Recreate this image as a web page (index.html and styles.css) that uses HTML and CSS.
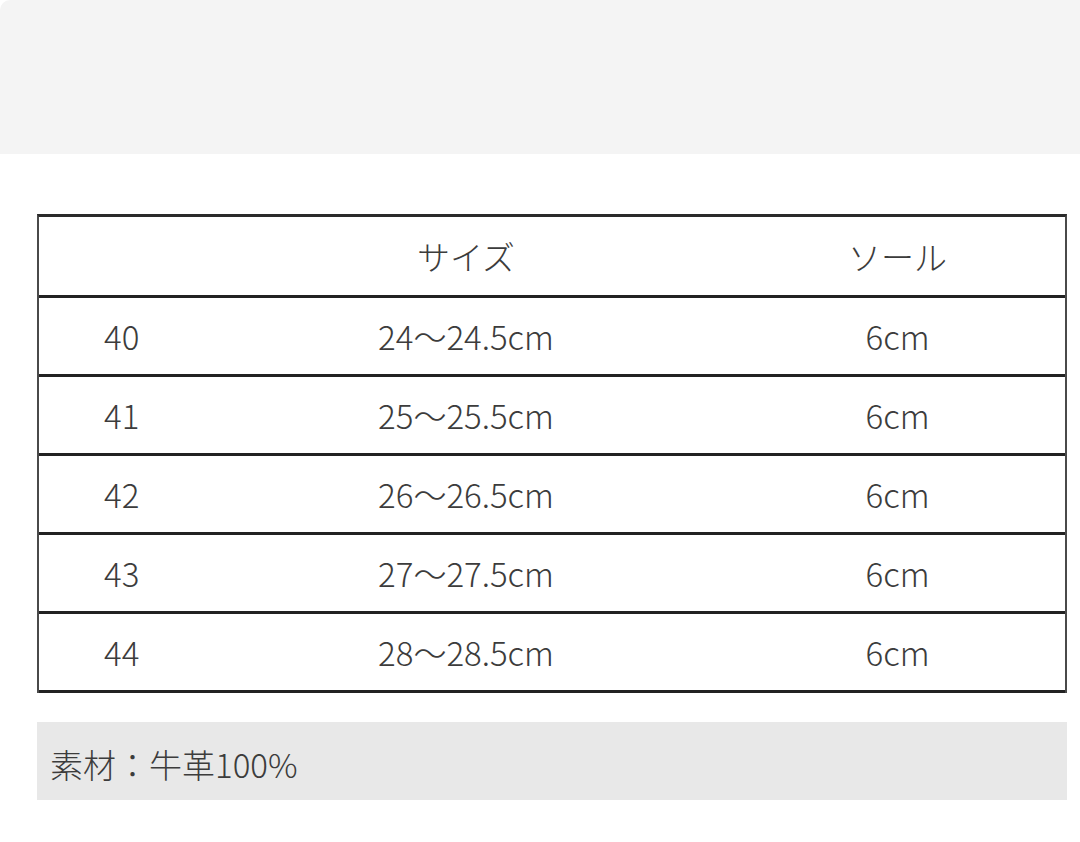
FILE: index.html
```html
<!DOCTYPE html>
<html lang="ja">
<head>
<meta charset="utf-8">
<link rel="stylesheet" href="styles.css">
</head>
<body>
<div class="band"></div>
<main class="content">
  <div class="table">
    <div class="row head">
      <div class="c1"></div>
      <div class="c2">サイズ</div>
      <div class="c3">ソール</div>
    </div>
    <div class="row">
      <div class="c1">40</div>
      <div class="c2">24～24.5cm</div>
      <div class="c3">6cm</div>
    </div>
    <div class="row">
      <div class="c1">41</div>
      <div class="c2">25～25.5cm</div>
      <div class="c3">6cm</div>
    </div>
    <div class="row">
      <div class="c1">42</div>
      <div class="c2">26～26.5cm</div>
      <div class="c3">6cm</div>
    </div>
    <div class="row">
      <div class="c1">43</div>
      <div class="c2">27～27.5cm</div>
      <div class="c3">6cm</div>
    </div>
    <div class="row">
      <div class="c1">44</div>
      <div class="c2">28～28.5cm</div>
      <div class="c3">6cm</div>
    </div>
  </div>
  <div class="note">素材：牛革100%</div>
</main>
</body>
</html>
```
FILE: styles.css
```css
html, body {
  margin: 0;
  padding: 0;
  background: #ffffff;
}
body {
  width: 1080px;
  height: 842px;
  overflow: hidden;
  font-family: "Noto Sans CJK JP", "Noto Sans", sans-serif;
  font-weight: 300;
  color: #3c3c3c;
}
.band {
  height: 154px;
  background: #f4f4f4;
  border-top-left-radius: 10px;
}
.content {
  padding: 60px 0 0 37px;
}
.table {
  width: 1026px;
  border-top: 3px solid #2a2a2a;
  border-left: 2px solid #4a4a4a;
  border-right: 2px solid #4a4a4a;
}
.row {
  display: grid;
  grid-template-columns: 161px 532px 1fr;
  align-items: center;
  height: 76px;
  border-bottom: 3px solid #222;
  font-size: 33px;
  line-height: 1;
}
.row.head {
  height: 78px;
}
.c1 {
  padding-left: 65px;
}
.c2, .c3 {
  text-align: center;
}
.c3 {
  padding-right: 2px;
}
.note {
  width: 1030px;
  margin-top: 29px;
  height: 78px;
  background: #e8e8e8;
  display: flex;
  align-items: center;
  padding-left: 13px;
  font-size: 33px;
  padding-top: 6px;
  box-sizing: border-box;
}
```
